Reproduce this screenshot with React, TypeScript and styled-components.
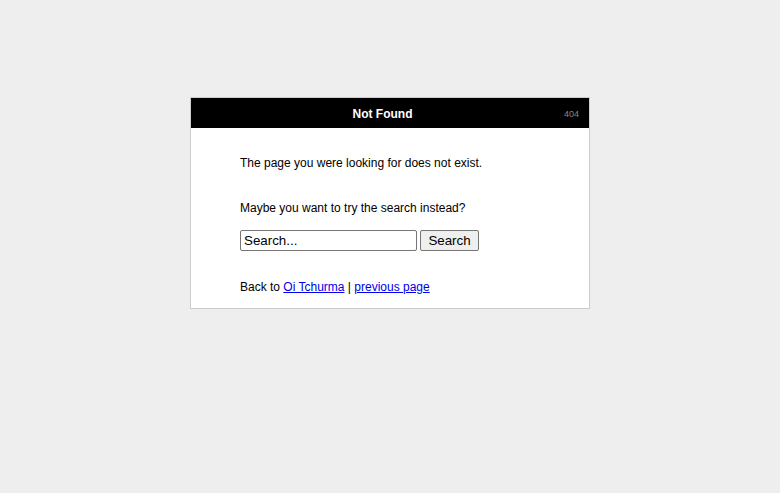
import React from "react";
import styled, { createGlobalStyle } from "styled-components";

const GlobalStyle = createGlobalStyle`
  html, body {
    margin: 0;
    padding: 0;
    background: #eeeeee;
  }
  body {
    font-family: "Liberation Sans", Arial, sans-serif;
    font-size: 12px;
    color: #000;
  }
`;

const Page = styled.div`
  padding-top: 97px;
  display: flex;
  justify-content: center;
  align-items: flex-start;
  min-height: 493px;
  box-sizing: border-box;
`;

const Box = styled.div`
  width: 400px;
  box-sizing: border-box;
  background: #fff;
  border: 1px solid #cccccc;
`;

const Header = styled.div`
  height: 30px;
  box-sizing: border-box;
  padding: 1px 10px 0;
  background: #000;
  display: flex;
  align-items: center;
`;

const Title = styled.h1`
  flex: 1;
  margin: 0;
  text-align: center;
  color: #fff;
  font-size: 12px;
  font-weight: bold;
`;

const Code = styled.span`
  color: #888;
  font-size: 9px;
`;

const Content = styled.div`
  padding: 0 49px 14px;
`;

const Para = styled.p<{ $top: number }>`
  margin: ${(p) => p.$top}px 0 0;
  line-height: 14px;
`;

const Form = styled.form`
  margin-top: 15px;
  display: flex;
  gap: 3px;
  height: 21px;
`;

const Input = styled.input`
  width: 177px;
  height: 21px;
  box-sizing: border-box;
  font-family: "Liberation Sans", Arial, sans-serif;
  font-size: 13.33px;
  padding: 1px 3px;
  border: 1px solid #767676;
  border-radius: 2px;
  color: #000;
`;

const Button = styled.button`
  width: 59px;
  height: 21px;
  box-sizing: border-box;
  font-family: "Liberation Sans", Arial, sans-serif;
  font-size: 13.33px;
  padding: 0;
  background: #efefef;
  border: 1px solid #767676;
  border-radius: 2px;
  color: #000;
`;

const Link = styled.a`
  color: #0000ee;
  text-decoration: underline;
`;

export default function App() {
  return (
    <>
      <GlobalStyle />
      <Page>
        <Box>
          <Header>
            <Title>Not Found</Title>
            <Code>404</Code>
          </Header>
          <Content>
            <Para $top={28}>The page you were looking for does not exist.</Para>
            <Para $top={31}>Maybe you want to try the search instead?</Para>
            <Form onSubmit={(e) => e.preventDefault()}>
              <Input defaultValue="Search..." />
              <Button type="submit">Search</Button>
            </Form>
            <Para $top={29}>
              Back to <Link href="#">Oi Tchurma</Link> |{" "}
              <Link href="#">previous page</Link>
            </Para>
          </Content>
        </Box>
      </Page>
    </>
  );
}
